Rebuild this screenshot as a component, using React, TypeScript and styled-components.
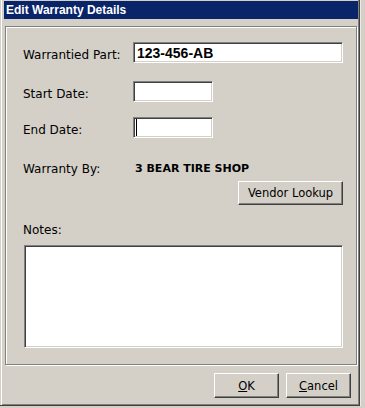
import React from "react";
import styled, { createGlobalStyle } from "styled-components";

const GlobalStyle = createGlobalStyle`
  html, body {
    margin: 0;
    padding: 0;
    background: #d4d0c8;
  }
  body {
    font-family: "DejaVu Sans", "Liberation Sans", sans-serif;
    font-size: 12px;
    color: #000;
  }
`;

const Window = styled.div`
  box-sizing: border-box;
  width: 360px;
  height: 406px;
  padding: 1px 1px 0 4px;
  background: #d4d0c8;
  border-right: 1px solid #404040;
  border-bottom: 1px solid #404040;
  box-shadow: inset 1px 0 0 #d4d0c8, inset 2px 0 0 #ffffff,
    inset -1px -1px 0 #808080, 1px 0 0 #ecebe6;
  display: flex;
  flex-direction: column;
`;

const TitleBar = styled.div`
  height: 18px;
  background: #0a246a;
  color: #fff;
  font-family: "Liberation Sans", Arial, sans-serif;
  font-weight: 700;
  font-size: 12px;
  display: flex;
  align-items: center;
  padding-left: 2px;
`;

const Panel = styled.div`
  box-sizing: border-box;
  margin: 7px 1px 0 1px;
  height: 339px;
  border: 1px solid #808080;
  box-shadow: inset 1px 1px 0 #fff, 1px 1px 0 #fff;
  padding: 15px 13px 0 17px;
  display: flex;
  flex-direction: column;
`;

const Row = styled.div<{ $top: number }>`
  display: flex;
  align-items: center;
  height: 21px;
  margin-top: ${(p) => p.$top}px;
`;

const Label = styled.div`
  width: 110px;
  flex-shrink: 0;
  padding-top: 5px;
`;

const Field = styled.div<{ $width?: number }>`
  box-sizing: border-box;
  height: 21px;
  width: ${(p) => (p.$width ? `${p.$width}px` : "auto")};
  flex: ${(p) => (p.$width ? "0 0 auto" : "1")};
  background: #fff;
  border: 1px solid;
  border-color: #808080 #fff #fff #808080;
  box-shadow: inset 1px 1px 0 #404040, inset -1px -1px 0 #d4d0c8;
  display: flex;
  align-items: center;
  padding-left: 3px;
  font-family: "Liberation Sans", Arial, sans-serif;
  font-weight: 700;
  font-size: 14px;
`;

const Caret = styled.span`
  width: 1px;
  height: 17px;
  margin-left: -1px;
  background: #000;
`;

const Vendor = styled.div`
  font-weight: 700;
  font-size: 11px;
  margin-left: 2px;
  padding-top: 3px;
`;

const ButtonRow = styled.div<{ $top: number }>`
  display: flex;
  justify-content: flex-end;
  gap: 7px;
  margin-top: ${(p) => p.$top}px;
`;

const Button = styled.button<{ $width: number; $height: number }>`
  box-sizing: border-box;
  width: ${(p) => p.$width}px;
  height: ${(p) => p.$height}px;
  padding: 0;
  background: #d4d0c8;
  border: 1px solid;
  border-color: #fff #404040 #404040 #fff;
  box-shadow: inset -1px -1px 0 #808080;
  font-family: "DejaVu Sans", "Liberation Sans", sans-serif;
  font-size: 11.5px;
  color: #000;
  border-radius: 0;
`;

const NotesLabel = styled.div`
  height: 20px;
  display: flex;
  align-items: center;
  margin-top: 15px;
`;

const Notes = styled.div`
  box-sizing: border-box;
  height: 103px;
  margin: 5px 0 0 1px;
  background: #fff;
  border: 1px solid;
  border-color: #808080 #fff #fff #808080;
  box-shadow: inset 1px 1px 0 #404040, inset -1px -1px 0 #d4d0c8;
`;

const Footer = styled.div`
  display: flex;
  justify-content: flex-end;
  gap: 7px;
  margin-top: 8px;
  padding-right: 7px;
`;

export default function App() {
  return (
    <>
      <GlobalStyle />
      <Window>
        <TitleBar>Edit Warranty Details</TitleBar>
        <Panel>
          <Row $top={0}>
            <Label>Warrantied Part:</Label>
            <Field>123-456-AB</Field>
          </Row>
          <Row $top={18}>
            <Label>Start Date:</Label>
            <Field $width={80} />
          </Row>
          <Row $top={15}>
            <Label>End Date:</Label>
            <Field $width={80}>
              <Caret />
            </Field>
          </Row>
          <Row $top={18}>
            <Label>Warranty By:</Label>
            <Vendor>3 BEAR TIRE SHOP</Vendor>
          </Row>
          <ButtonRow $top={4}>
            <Button $width={105} $height={24}>
              Vendor Lookup
            </Button>
          </ButtonRow>
          <NotesLabel>Notes:</NotesLabel>
          <Notes />
        </Panel>
        <Footer>
          <Button $width={65} $height={25}>
            <u>O</u>K
          </Button>
          <Button $width={65} $height={25}>
            <u>C</u>ancel
          </Button>
        </Footer>
      </Window>
    </>
  );
}
